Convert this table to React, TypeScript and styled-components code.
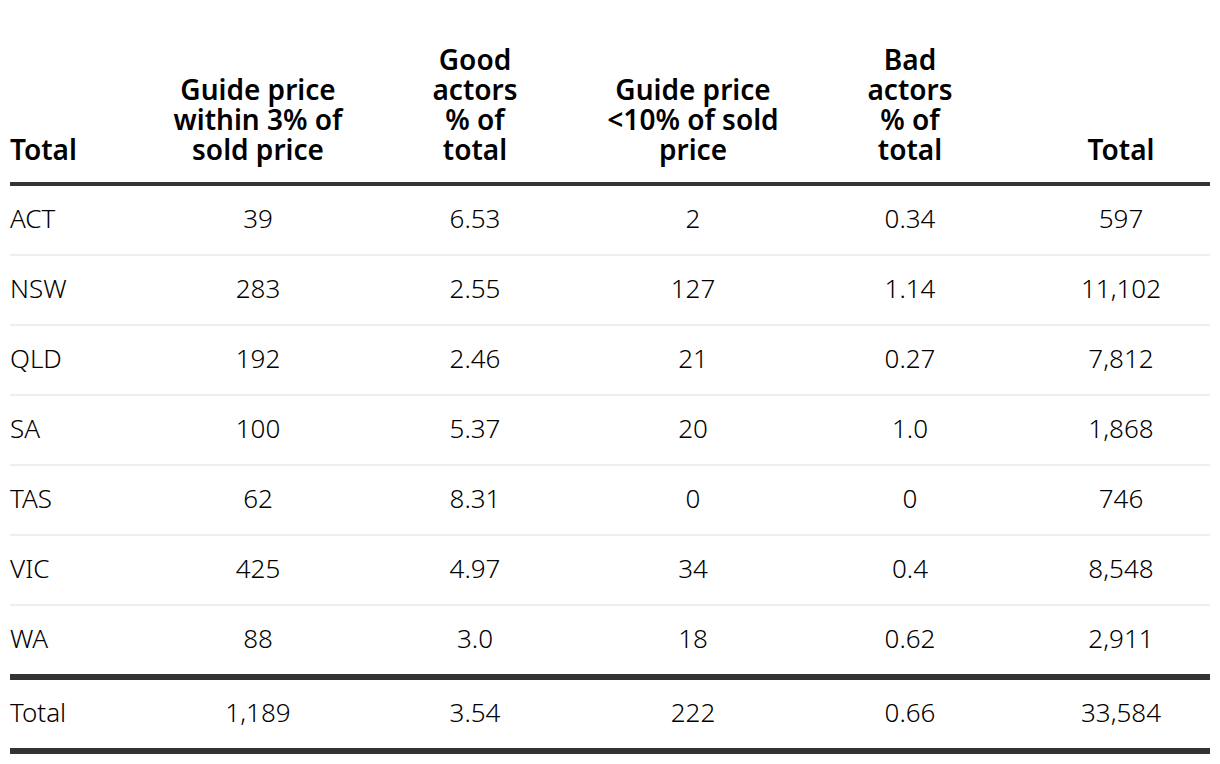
import React from "react";
import styled, { createGlobalStyle } from "styled-components";

const Global = createGlobalStyle`
  html, body { margin: 0; padding: 0; background: #fff; }
  body { font-family: "Noto Sans", "Open Sans", sans-serif; color: #000; }
`;

const Wrap = styled.div`
  padding: 44px 10px 0 10px;
`;

const Table = styled.table`
  width: 1200px;
  border-collapse: collapse;
  table-layout: fixed;
`;

const Th = styled.th<{ $left?: boolean }>`
  font-size: 28px;
  font-weight: 600;
  line-height: 30px;
  text-align: ${(p) => (p.$left ? "left" : "center")};
  vertical-align: bottom;
  padding: 0 0 18px 0;
`;

const HeadRow = styled.tr`
  border-bottom: 4px solid #333;
`;

const BodyRow = styled.tr<{ $last?: boolean }>`
  border-bottom: ${(p) => (p.$last ? "6px solid #333" : "2px solid #eee")};
`;

const Td = styled.td<{ $left?: boolean }>`
  font-size: 26px;
  font-weight: 300;
  line-height: 30px;
  height: 64px;
  padding: 0 0 4px 0;
  text-align: ${(p) => (p.$left ? "left" : "center")};
  vertical-align: middle;
`;

const FootRow = styled.tr`
  border-bottom: 6px solid #333;
`;

const widths = [154, 188, 246, 190, 244, 178];

const headers = [
  "Total",
  "Guide price within 3% of sold price",
  "Good actors % of total",
  "Guide price <10% of sold price",
  "Bad actors % of total",
  "Total",
];

const HeadText = styled.span<{ $w: number }>`
  display: inline-block;
  max-width: ${(p) => p.$w}px;
`;

const rows = [
  ["ACT", "39", "6.53", "2", "0.34", "597"],
  ["NSW", "283", "2.55", "127", "1.14", "11,102"],
  ["QLD", "192", "2.46", "21", "0.27", "7,812"],
  ["SA", "100", "5.37", "20", "1.0", "1,868"],
  ["TAS", "62", "8.31", "0", "0", "746"],
  ["VIC", "425", "4.97", "34", "0.4", "8,548"],
  ["WA", "88", "3.0", "18", "0.62", "2,911"],
];

const total = ["Total", "1,189", "3.54", "222", "0.66", "33,584"];

const headMax = [154, 190, 100, 190, 100, 178];

export default function App() {
  return (
    <>
      <Global />
      <Wrap>
        <Table>
          <colgroup>
            {widths.map((w, i) => (
              <col key={i} style={{ width: w }} />
            ))}
          </colgroup>
          <thead>
            <HeadRow>
              {headers.map((h, i) => (
                <Th key={i} $left={i === 0}>
                  <HeadText $w={headMax[i]}>{h}</HeadText>
                </Th>
              ))}
            </HeadRow>
          </thead>
          <tbody>
            {rows.map((r, ri) => (
              <BodyRow key={ri} $last={ri === rows.length - 1}>
                {r.map((c, ci) => (
                  <Td key={ci} $left={ci === 0}>
                    {c}
                  </Td>
                ))}
              </BodyRow>
            ))}
          </tbody>
          <tfoot>
            <FootRow>
              {total.map((c, ci) => (
                <Td key={ci} $left={ci === 0}>
                  {c}
                </Td>
              ))}
            </FootRow>
          </tfoot>
        </Table>
      </Wrap>
    </>
  );
}
